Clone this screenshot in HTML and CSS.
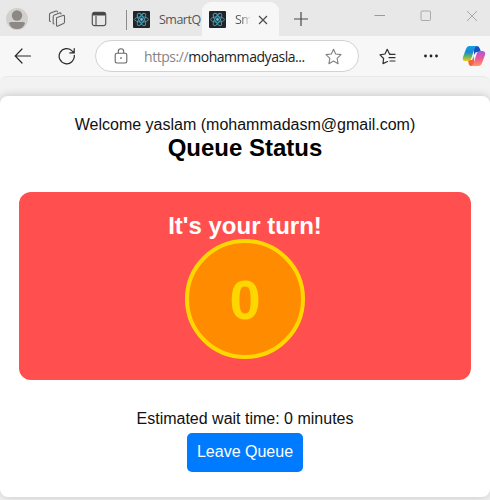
FILE: index.html
```
<!DOCTYPE html>
<html lang="en">
<head>
<meta charset="utf-8">
<title>SmartQ</title>
<link rel="stylesheet" href="styles.css">
</head>
<body>
<svg class="defs" width="0" height="0">
  <symbol id="react" viewBox="0 0 16 16">
    <rect width="16" height="16" rx="1" fill="#20252a"/>
    <g fill="none" stroke="#459fb8" stroke-width=".85">
      <ellipse cx="8" cy="8" rx="6.5" ry="2.5"/>
      <ellipse cx="8" cy="8" rx="6.5" ry="2.5" transform="rotate(60 8 8)"/>
      <ellipse cx="8" cy="8" rx="6.5" ry="2.5" transform="rotate(120 8 8)"/>
    </g>
    <circle cx="8" cy="8" r="1.3" fill="#5bc5df"/>
  </symbol>
</svg>
<header class="tabbar">
  <svg class="avatar" width="22" height="22" viewBox="0 0 22 22"><circle cx="11" cy="11" r="11" fill="#d2d0cd"/><circle cx="11" cy="7.5" r="5.2" fill="#8b8886"/><path d="M3 15.500Q3 14 5 14H17Q19 14 19 15.500Q17 21 11 21Q5 21 3 15.500Z" fill="#8b8886"/></svg>
  <svg class="workspaces" width="18" height="18" viewBox="0 0 18 18" fill="none" stroke="#666" stroke-width="1.1" stroke-linejoin="round" stroke-linecap="round"><path d="M9 7.500 15 5.500Q16.500 5 16.500 6.500V12Q16.500 13.200 15.500 13.500L10 16Q8.500 16.500 8.500 15V8.500Q8.500 7.700 9 7.500Z"/><path d="M6 14 5.200 13.500V6.800Q5.200 5.500 6.300 5L11.500 3Q13 2.500 13 4"/><path d="M2.300 11.500 1.500 11V4.500Q1.500 3.500 2.500 3L8 1Q9.300 .7 9.500 2"/></svg>
  <svg class="tabmenu" width="16" height="16" viewBox="0 0 16 16" fill="none" stroke="#555" stroke-width="1.2"><rect x="1.300" y="1.300" width="13.400" height="13.400" rx="2.200"/><path d="M5 5V14"/><path d="M2 3H14" stroke="#444" stroke-width="3"/></svg>
  <i class="divider"></i>
  <div class="tab"><svg width="17" height="17"><use href="#react"/></svg><span>SmartQ</span></div>
  <div class="tab active"><svg width="17" height="17"><use href="#react"/></svg><span class="faded">Sm</span><svg class="close" width="10" height="10" viewBox="0 0 10 10" stroke="#4d4d4d" stroke-width="1.2"><path d="M1 1 9 9M9 1 1 9"/></svg></div>
  <svg class="plus" width="14" height="14" viewBox="0 0 14 14" stroke="#484848" stroke-width="1.200"><path d="M0 7H14M7 0V14"/></svg>
  <div class="window">
    <svg width="12" height="12" viewBox="0 0 12 12" stroke="#999"><path d="M.5 5.500H11"/></svg>
    <svg width="12" height="12" viewBox="0 0 12 12" fill="none" stroke="#aaa"><rect x="1" y="1" width="9.500" height="9.500" rx="1"/></svg>
    <svg width="12" height="12" viewBox="0 0 12 12" stroke="#a7a7a7"><path d="M1 1 11 11M11 1 1 11"/></svg>
  </div>
</header>
<nav class="toolbar">
  <svg class="back" width="18" height="16" viewBox="0 0 18 16" fill="none" stroke="#292929" stroke-width="1.200" stroke-linecap="round"><path d="M8 1 1.200 8 8 15M1.500 8H16.500"/></svg>
  <svg class="reload" width="18" height="18" viewBox="0 0 18 18" fill="none" stroke="#292929" stroke-width="1.200" stroke-linecap="round"><path d="M16.300 8.300A7.600 7.600 0 1 1 14.400 4.100L16 5.800M16.200 1.500V5.900H11.800"/></svg>
  <div class="address">
    <svg width="14" height="16" viewBox="0 0 14 16" fill="none" stroke="#666" stroke-width="1.100"><rect x="1.200" y="5.300" width="11.600" height="9.700" rx="1.700"/><path d="M4.300 5V3.400A2.700 2.700 0 0 1 9.700 3.400V5"/><circle cx="7" cy="10" r=".6" fill="#555" stroke-width=".6"/></svg>
    <span class="url"><span class="scheme">https://</span>mohammadyasla...</span>
    <svg width="17" height="17" viewBox="0 0 17 17" fill="none" stroke="#808080" stroke-width="1.100" stroke-linejoin="round"><path d="M8.500 1.200 10.700 6 16 6.600 12.100 10.300 13.100 15.700 8.500 13.100 3.900 15.700 4.900 10.300 1 6.600 6.300 6Z"/></svg>
  </div>
  <svg class="favorites" width="18" height="17" viewBox="0 0 18 17" fill="none" stroke="#303030" stroke-width="1.200" stroke-linejoin="round" stroke-linecap="round"><path d="M8.500 13.500 4 15.600 4.600 10.500 1 6.800 6 6 8.200 1.300 10.500 6H11.500M10.700 6.400H16M10 9.700H16M11 13H16"/></svg>
  <svg class="more" width="14" height="4" viewBox="0 0 14 4" fill="#222"><circle cx="1.500" cy="2" r="1.400"/><circle cx="7" cy="2" r="1.400"/><circle cx="12.500" cy="2" r="1.400"/></svg>
  <svg class="copilot" width="24" height="22" viewBox="0 0 24 22">
    <defs>
      <linearGradient id="cool" x2="0" y2="1"><stop stop-color="#169fe0"/><stop offset=".4" stop-color="#1688d4"/><stop offset=".7" stop-color="#65b75e"/><stop offset="1" stop-color="#f2c918"/></linearGradient>
      <linearGradient id="warm" x2="0" y2="1"><stop stop-color="#a35be0"/><stop offset=".5" stop-color="#ee5a93"/><stop offset="1" stop-color="#ff965f"/></linearGradient>
    </defs>
    <path d="M12 1H15Q17 1 18 4L19 7H15Q13 7 12 10Z" fill="#1652c4"/>
    <path d="M6 15H10L12 11V21H9Q7 21 6.500 18Z" fill="#f4643c"/>
    <path d="M7 1H15Q13 2 12 5L9.500 13Q8.500 16 6 16H3Q0 16 1 12L4 4Q5 1 7 1Z" fill="url(#cool)"/>
    <path d="M17.500 6H20Q24 6 23 10L20 18Q19 21 16 21H9Q11 20 12 17L14.500 9Q15.500 6 17.500 6Z" fill="url(#warm)"/>
  </svg>
</nav>
<main class="viewport">
  <section class="card">
    <p>Welcome yaslam (mohammadasm@gmail.com)</p>
    <h1>Queue Status</h1>
    <div class="turn">
      <h2>It's your turn!</h2>
      <div class="number">0</div>
    </div>
    <p>Estimated wait time: 0 minutes</p>
    <button class="leave">Leave Queue</button>
  </section>
</main>
</body>
</html>
```
FILE: styles.css
```
* { box-sizing: border-box; }
body { margin: 0; width: 490px; height: 500px; overflow: hidden; background: #f7f7f7; font-family: "Liberation Sans", Arial, sans-serif; }
svg { display: block; flex: none; }
.defs { position: absolute; }
.tabbar, .toolbar, .tab, .window, .address { display: flex; align-items: center; }
.tabbar { height: 36px; background: #e8e8e8; font: 13px "Open Sans", sans-serif; color: #555; }
.avatar { margin-left: 6px; margin-top: 2px; }
.workspaces { margin-left: 20px; margin-top: 2px; }
.tabmenu { margin-left: 25px; margin-top: 2px; }
.divider { width: 1px; height: 20px; margin-left: 19px; margin-top: 3px; background: #8c8c8c; }
.tab { width: 75px; height: 34px; margin-top: 2px; padding-left: 6px; overflow: hidden; }
.tab span { width: 42px; margin-left: 9px; white-space: nowrap; font-size: 12.5px; letter-spacing: -.5px; }
.tab.active { width: 77px; padding-left: 7px; border-radius: 9px 9px 0 0; background: #f7f7f7; }
.tab .faded { width: 16px; overflow: hidden; background: linear-gradient(90deg, #555 40%, #eee 95%); background-clip: text; color: transparent; }
.tab .close { margin-left: 7px; margin-top: 1px; }
.plus { margin-left: 15px; margin-top: 1px; }
.window { gap: 34px; margin-left: 66px; margin-top: -5px; }
.toolbar { height: 40px; background: #f7f7f7; }
.back { margin-left: 14px; }
.reload { margin-left: 26px; }
.address { width: 264px; height: 32px; margin-left: 19px; padding: 0 16px 0 18px; border: 1px solid #d2d2d2; border-radius: 16px; background: #fff; }
.url { width: 163px; margin-left: 16px; margin-right: 19px; white-space: nowrap; font: 14px "Open Sans", sans-serif; letter-spacing: -.45px; color: #222; }
.scheme { color: #858585; }
.favorites { margin-left: 20px; }
.more { margin-left: 27px; }
.copilot { margin-left: 24px; }
.viewport { height: 424px; padding-top: 19px; border-top: 1px solid #e9e9e9; border-radius: 7px 7px 0 0; background: #f2f2f2; }
.card { height: 401px; padding: 20px 19px; border-radius: 8px; background: #fff; text-align: center; color: #111; box-shadow: 0 0 10px rgba(0,0,0,.2); }
.card p { margin: 0; font-size: 16px; line-height: 18px; }
.card h1 { margin: 0 0 30px; font-size: 24px; line-height: 28px; color: #000; }
.turn { height: 187.5px; margin-bottom: 30px; padding-top: 20px; border-radius: 12px; background: #ff4f4f; color: #fff; }
.turn h2 { margin: 0; font-size: 24px; line-height: 27px; }
.number { display: flex; align-items: center; justify-content: center; width: 120px; height: 120px; margin: 0 auto; border: 4px solid #ffd700; border-radius: 50%; background: #ff8c00; color: #ffd700; font-size: 56px; font-weight: bold; }
.leave { display: block; width: 116px; height: 39px; margin: 5px auto 0; padding: 0; border: 0; border-radius: 5px; background: #007bff; color: #fff; font: 16px "Liberation Sans", Arial, sans-serif; }
```
